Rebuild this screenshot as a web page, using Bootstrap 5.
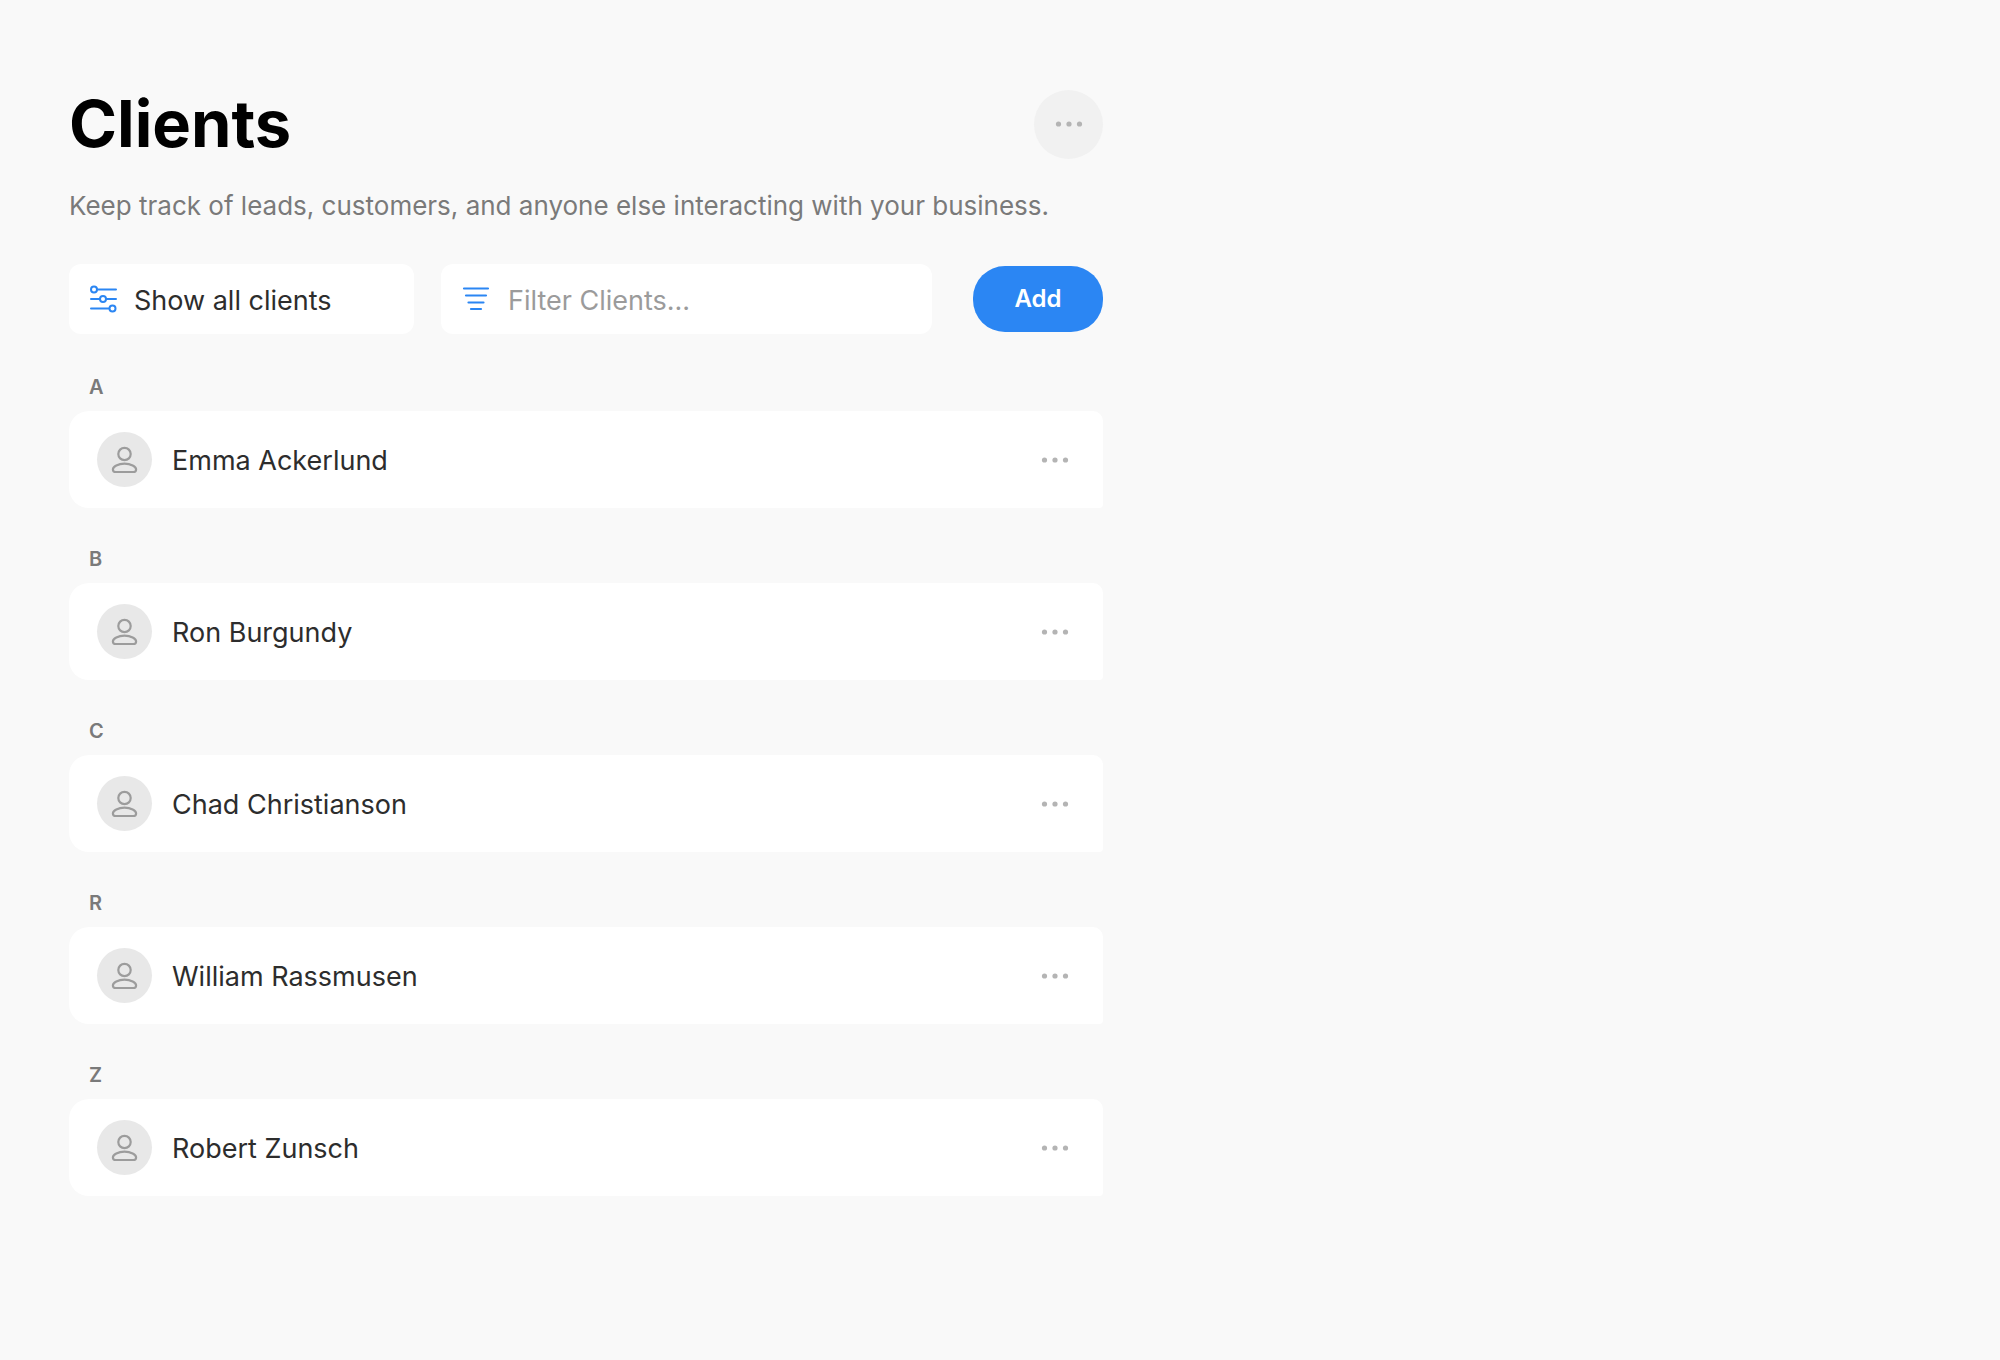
<!DOCTYPE html>
<html lang="en">
<head>
<meta charset="utf-8">
<meta name="viewport" content="width=device-width, initial-scale=1">
<title>Clients</title>
<link href="https://cdn.jsdelivr.net/npm/bootstrap@5.3.0/dist/css/bootstrap.min.css" rel="stylesheet">
<style>
  body { background: #f9f9f9; color: #2d2d2d; font-family: Inter, "Liberation Sans", sans-serif; font-size: 27px; line-height: 36px; }
  .page { max-width: 1172px; padding: 84px 69px; }
  .page-title { color: #000; font-size: 65px; line-height: 80px; font-weight: 700; }
  .page-intro { color: #7a7a7a; font-size: 26px; line-height: 36px; margin: 24px 0 40px; }
  .tools { padding-bottom: 2px; }
  .tool { background: #fff; border: 0; border-radius: 12px; height: 70px; padding: 0 20px; gap: 17px; font-size: 27px; color: #2d2d2d; }
  .tool-view { flex: 0 1 345px; margin-right: 27px; }
  .tool-filter { flex: 1 1 400px; margin-right: 41px; }
  .tool-filter input { font-size: 27px; line-height: 36px; color: #2d2d2d; }
  .tool-filter input::placeholder { color: #9b9b9b; opacity: 1; }
  .tool span, .tool input.form-control, .client a { padding: 3px 0 0; }
  .btn-add { background: #2b86f3; color: #fff; font-size: 24px; line-height: 36px; font-weight: 600; width: 130px; height: 66px; border: 0; border-radius: 32px; }
  .btn-add:hover { background: #1f78e4; color: #fff; }
  .more { border: 0; padding: 0; background: none; color: #b4b4b4; }
  .more-round { width: 69px; height: 69px; background: #f1f1f1; }
  .letter { color: #7a7a7a; font-size: 20px; line-height: 28px; font-weight: 600; margin: 37px 20px 10px; }
  .client { background: #fff; height: 97px; padding: 0 34px 0 28px; border-radius: 20px 10px 4px 20px; }
  .avatar { width: 55px; height: 55px; background: #e8e8e8; color: #9c9c9c; margin-right: 20px; }
  .client a { color: inherit; }
</style>
<script src="https://cdn.jsdelivr.net/npm/bootstrap@5.3.0/dist/js/bootstrap.bundle.min.js" defer></script>
</head>
<body>
<svg class="d-none" aria-hidden="true">
  <symbol id="dots" viewBox="0 0 28 8"><g fill="currentColor"><circle cx="3.5" cy="4" r="2.6"/><circle cx="14" cy="4" r="2.6"/><circle cx="24.5" cy="4" r="2.6"/></g></symbol>
  <symbol id="person" viewBox="0 0 28 28"><g fill="none" stroke="currentColor" stroke-width="2.2"><circle cx="13.500" cy="8" r="6.200"/><path d="M13.500 17.700c-6.400 0-11.600 2.800-11.600 5.700 0 1.800 1.100 2.600 2.900 2.600h17.400c1.800 0 2.900-.8 2.900-2.600 0-2.900-5.200-5.700-11.600-5.700z"/></g></symbol>
</svg>
<main class="page">
  <header>
    <div class="d-flex align-items-center justify-content-between">
      <h1 class="page-title mb-0">Clients</h1>
      <button type="button" class="more more-round rounded-circle d-flex align-items-center justify-content-center" aria-label="More options"><svg width="28" height="8"><use href="#dots"/></svg></button>
    </div>
    <p class="page-intro">Keep track of leads, customers, and anyone else interacting with your business.</p>
  </header>

  <form class="tools d-flex align-items-center">
    <button type="button" class="tool tool-view d-flex align-items-center text-start">
      <svg width="28" height="28" viewBox="0 0 28 28" fill="none" stroke="#2b86f3" stroke-width="2" stroke-linecap="round" aria-hidden="true"><circle cx="5" cy="4.500" r="3"/><path d="M8.500 4.500H27M2 14h8.500M17.500 14H27M2 23.500h18"/><circle cx="14" cy="14" r="3"/><circle cx="23.500" cy="23.500" r="3"/></svg>
      <span>Show all clients</span>
    </button>
    <label class="tool tool-filter d-flex align-items-center">
      <svg class="flex-shrink-0" width="30" height="28" viewBox="0 0 30 28" fill="none" stroke="#2b86f3" stroke-width="2.2" stroke-linecap="round" aria-hidden="true"><path d="M3 3.500h24M5 10.500h20M7.500 17.500h15M10 24h10"/></svg>
      <input type="text" class="form-control border-0 bg-transparent shadow-none" placeholder="Filter Clients..." aria-label="Filter clients">
    </label>
    <button type="submit" class="btn btn-add p-0">Add</button>
  </form>

  <section>
    <h2 class="letter">A</h2>
    <div class="client d-flex align-items-center">
      <span class="avatar rounded-circle d-flex align-items-center justify-content-center"><svg width="28" height="28"><use href="#person"/></svg></span>
      <a href="#" class="text-decoration-none">Emma Ackerlund</a>
      <button type="button" class="more d-flex ms-auto" aria-label="Options for Emma Ackerlund"><svg width="28" height="8"><use href="#dots"/></svg></button>
    </div>
  </section>
  <section>
    <h2 class="letter">B</h2>
    <div class="client d-flex align-items-center">
      <span class="avatar rounded-circle d-flex align-items-center justify-content-center"><svg width="28" height="28"><use href="#person"/></svg></span>
      <a href="#" class="text-decoration-none">Ron Burgundy</a>
      <button type="button" class="more d-flex ms-auto" aria-label="Options for Ron Burgundy"><svg width="28" height="8"><use href="#dots"/></svg></button>
    </div>
  </section>
  <section>
    <h2 class="letter">C</h2>
    <div class="client d-flex align-items-center">
      <span class="avatar rounded-circle d-flex align-items-center justify-content-center"><svg width="28" height="28"><use href="#person"/></svg></span>
      <a href="#" class="text-decoration-none">Chad Christianson</a>
      <button type="button" class="more d-flex ms-auto" aria-label="Options for Chad Christianson"><svg width="28" height="8"><use href="#dots"/></svg></button>
    </div>
  </section>
  <section>
    <h2 class="letter">R</h2>
    <div class="client d-flex align-items-center">
      <span class="avatar rounded-circle d-flex align-items-center justify-content-center"><svg width="28" height="28"><use href="#person"/></svg></span>
      <a href="#" class="text-decoration-none">William Rassmusen</a>
      <button type="button" class="more d-flex ms-auto" aria-label="Options for William Rassmusen"><svg width="28" height="8"><use href="#dots"/></svg></button>
    </div>
  </section>
  <section>
    <h2 class="letter">Z</h2>
    <div class="client d-flex align-items-center">
      <span class="avatar rounded-circle d-flex align-items-center justify-content-center"><svg width="28" height="28"><use href="#person"/></svg></span>
      <a href="#" class="text-decoration-none">Robert Zunsch</a>
      <button type="button" class="more d-flex ms-auto" aria-label="Options for Robert Zunsch"><svg width="28" height="8"><use href="#dots"/></svg></button>
    </div>
  </section>
</main>
</body>
</html>
